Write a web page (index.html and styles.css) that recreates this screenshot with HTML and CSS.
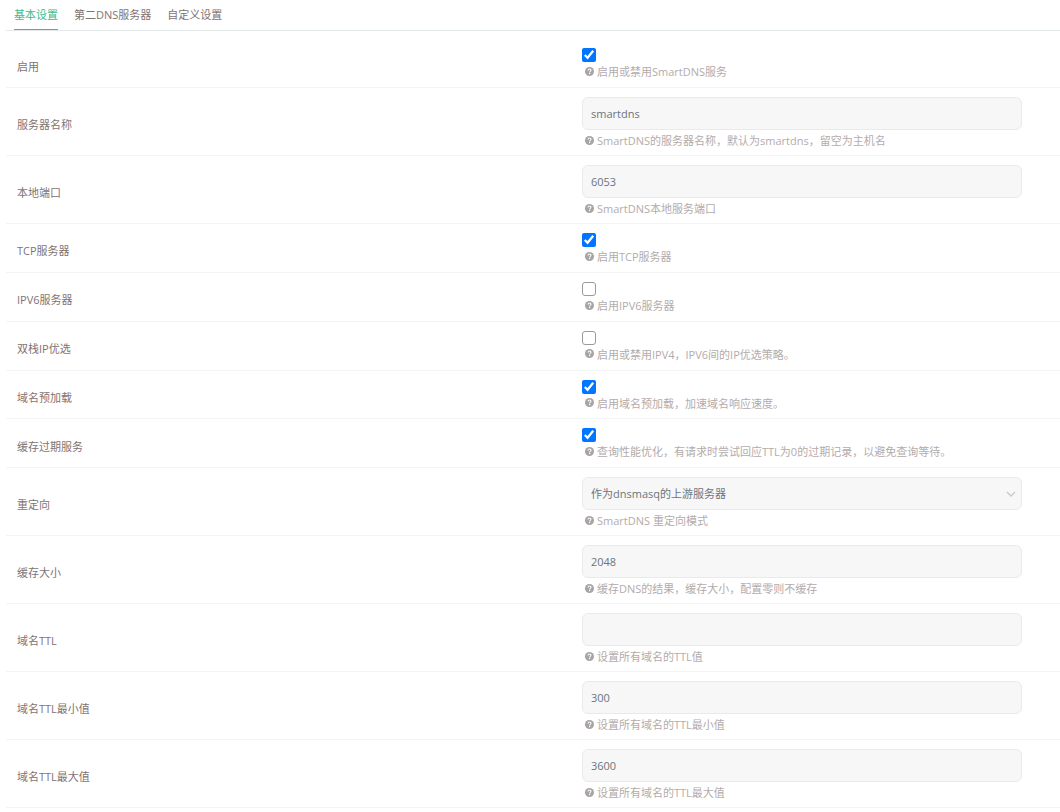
FILE: index.html
```html
<!DOCTYPE html>
<html lang="zh-CN">
    <head>
        <meta charset="UTF-8" />
        <title>SmartDNS</title>
        <link rel="stylesheet" href="styles.css">
    </head>
    <body>
        <svg class="icon-defs" width="0" height="0">
            <symbol id="help" viewBox="0 0 16 16">
                <circle cx="8" cy="8" r="8" fill="currentColor" />
                <path d="M5.400 6.200C5.500 4.600 6.600 3.700 8.100 3.700c1.500 0 2.600.9 2.600 2.200 0 1.900-2.500 1.900-2.500 3.700" fill="none" stroke="#fff" stroke-width="1.900" />
                <rect x="7.100" y="10.600" width="2.200" height="2.100" fill="#fff" />
            </symbol>
        </svg>
        <ul class="tabs">
            <li class="tab active">基本设置</li>
            <li class="tab">第二DNS服务器</li>
            <li class="tab">自定义设置</li>
        </ul>
        <form class="settings">
            <div class="row">
                <label class="row-label">启用</label>
                <div class="row-field">
                    <input type="checkbox" checked />
                    <p class="help"><svg class="help-icon"><use href="#help" /></svg>启用或禁用SmartDNS服务</p>
                </div>
            </div>
            <div class="row">
                <label class="row-label">服务器名称</label>
                <div class="row-field">
                    <input type="text" class="text-input" value="smartdns" />
                    <p class="help"><svg class="help-icon"><use href="#help" /></svg>SmartDNS的服务器名称，默认为smartdns，留空为主机名</p>
                </div>
            </div>
            <div class="row">
                <label class="row-label">本地端口</label>
                <div class="row-field">
                    <input type="text" class="text-input" value="6053" />
                    <p class="help"><svg class="help-icon"><use href="#help" /></svg>SmartDNS本地服务端口</p>
                </div>
            </div>
            <div class="row">
                <label class="row-label">TCP服务器</label>
                <div class="row-field">
                    <input type="checkbox" checked />
                    <p class="help"><svg class="help-icon"><use href="#help" /></svg>启用TCP服务器</p>
                </div>
            </div>
            <div class="row">
                <label class="row-label">IPV6服务器</label>
                <div class="row-field">
                    <input type="checkbox" />
                    <p class="help"><svg class="help-icon"><use href="#help" /></svg>启用IPV6服务器</p>
                </div>
            </div>
            <div class="row">
                <label class="row-label">双栈IP优选</label>
                <div class="row-field">
                    <input type="checkbox" />
                    <p class="help"><svg class="help-icon"><use href="#help" /></svg>启用或禁用IPV4，IPV6间的IP优选策略。</p>
                </div>
            </div>
            <div class="row">
                <label class="row-label">域名预加载</label>
                <div class="row-field">
                    <input type="checkbox" checked />
                    <p class="help"><svg class="help-icon"><use href="#help" /></svg>启用域名预加载，加速域名响应速度。</p>
                </div>
            </div>
            <div class="row">
                <label class="row-label">缓存过期服务</label>
                <div class="row-field">
                    <input type="checkbox" checked />
                    <p class="help"><svg class="help-icon"><use href="#help" /></svg>查询性能优化，有请求时尝试回应TTL为0的过期记录，以避免查询等待。</p>
                </div>
            </div>
            <div class="row">
                <label class="row-label">重定向</label>
                <div class="row-field">
                    <div class="select-wrap">
                        <select class="text-input">
                            <option>作为dnsmasq的上游服务器</option>
                        </select>
                        <svg class="select-arrow" viewBox="0 0 10 6"><path d="M1 1l4 4 4-4" fill="none" stroke="currentColor" stroke-width="1.300" /></svg>
                    </div>
                    <p class="help"><svg class="help-icon"><use href="#help" /></svg>SmartDNS 重定向模式</p>
                </div>
            </div>
            <div class="row">
                <label class="row-label">缓存大小</label>
                <div class="row-field">
                    <input type="text" class="text-input" value="2048" />
                    <p class="help"><svg class="help-icon"><use href="#help" /></svg>缓存DNS的结果，缓存大小，配置零则不缓存</p>
                </div>
            </div>
            <div class="row">
                <label class="row-label">域名TTL</label>
                <div class="row-field">
                    <input type="text" class="text-input" />
                    <p class="help"><svg class="help-icon"><use href="#help" /></svg>设置所有域名的TTL值</p>
                </div>
            </div>
            <div class="row">
                <label class="row-label">域名TTL最小值</label>
                <div class="row-field">
                    <input type="text" class="text-input" value="300" />
                    <p class="help"><svg class="help-icon"><use href="#help" /></svg>设置所有域名的TTL最小值</p>
                </div>
            </div>
            <div class="row">
                <label class="row-label">域名TTL最大值</label>
                <div class="row-field">
                    <input type="text" class="text-input" value="3600" />
                    <p class="help"><svg class="help-icon"><use href="#help" /></svg>设置所有域名的TTL最大值</p>
                </div>
            </div>
        </form>
    </body>
</html>
```

FILE: styles.css
```css
* {
    padding: 0;
    margin: 0;
    box-sizing: border-box;
}
body {
    font-family: "Open Sans", "Noto Sans CJK SC", sans-serif;
    font-size: 11px;
    color: #7f7373;
    background-color: #ffffff;
    padding-left: 6px;
    overflow: hidden;
}
.icon-defs {
    display: block;
    height: 0;
}
.tabs {
    display: flex;
    list-style: none;
    height: 31px;
    padding-left: 8px;
    gap: 16px;
    border-bottom: 1px solid #e4eaea;
}
.tab {
    height: 30px;
    line-height: 30px;
}
.tab.active {
    color: #3fbb8d;
    border-bottom: 1px solid #3fbb8d;
}
.settings {
    padding-top: 8.45px;
}
.row {
    display: flex;
    align-items: center;
    padding: 9px 0 0;
    border-bottom: 1px solid #f3f4f4;
}
.row-label {
    width: 576px;
    padding-left: 11px;
    padding-bottom: 4.5px;
}
.row-field {
    width: 440px;
    display: flex;
    flex-direction: column;
    align-items: flex-start;
}
input[type='checkbox'] {
    display: block;
    width: 14px;
    height: 14px;
    margin: 0 0 -1px;
}
input[type='checkbox']:not(:checked) {
    appearance: none;
    background-color: #ffffff;
    border: 1.5px solid #9a9a9a;
    border-radius: 3px;
}
input[type='checkbox'] + .help {
    margin-bottom: 5.8px;
}
.text-input {
    display: block;
    width: 440px;
    height: 33px;
    padding: 0 8px;
    background-color: #f7f7f7;
    border: 1px solid #e8ebeb;
    border-radius: 6px;
    font-family: inherit;
    font-size: 11px;
    color: #6c757d;
    outline: none;
}
select.text-input {
    appearance: none;
}
.select-wrap {
    position: relative;
}
.select-arrow {
    position: absolute;
    top: 14px;
    right: 6px;
    width: 10px;
    height: 6px;
    color: #c3c9cf;
}
.help {
    display: flex;
    align-items: center;
    height: 20px;
    padding-left: 3px;
    margin-bottom: 5px;
    color: #b3abab;
    white-space: nowrap;
}
.help-icon {
    width: 9px;
    height: 9px;
    margin-right: 3px;
    color: #a9a3a3;
}
```
